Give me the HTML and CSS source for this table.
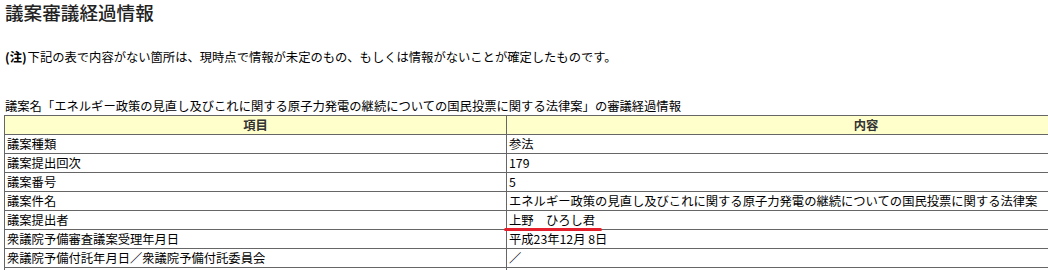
FILE: index.html
```html
<!DOCTYPE html>
<html lang="ja">
<head>
<meta charset="utf-8">
<title>議案審議経過情報</title>
<link rel="stylesheet" href="styles.css">
</head>
<body>
<h1 class="title">議案審議経過情報</h1>
<p class="note"><b>(注)</b>下記の表で内容がない箇所は、現時点で情報が未定のもの、もしくは情報がないことが確定したものです。</p>
<div class="caption">議案名「エネルギー政策の見直し及びこれに関する原子力発電の継続についての国民投票に関する法律案」の審議経過情報</div>
<table class="info">
  <thead>
    <tr><th class="col-item">項目</th><th class="col-body">内容</th></tr>
  </thead>
  <tbody>
    <tr><td>議案種類</td><td>参法</td></tr>
    <tr><td>議案提出回次</td><td>179</td></tr>
    <tr><td>議案番号</td><td>5</td></tr>
    <tr><td>議案件名</td><td>エネルギー政策の見直し及びこれに関する原子力発電の継続についての国民投票に関する法律案</td></tr>
    <tr><td>議案提出者</td><td class="marked">上野　ひろし君<span class="redline"></span></td></tr>
    <tr><td>衆議院予備審査議案受理年月日</td><td>平成23年12月 8日</td></tr>
    <tr><td>衆議院予備付託年月日／衆議院予備付託委員会</td><td>／</td></tr>
    <tr><td>&nbsp;</td><td>&nbsp;</td></tr>
  </tbody>
</table>
</body>
</html>
```
FILE: styles.css
```css
html, body {
  margin: 0;
  padding: 0;
  background: #fff;
}
body {
  padding: 0 0 0 4px;
  font-family: "Noto Sans CJK JP", "Noto Sans", sans-serif;
  font-size: 12.3px;
  color: #000;
  width: 1300px;
}
.title {
  margin: 0;
  font-size: 18.6px;
  font-weight: 500;
  line-height: 24px;
  color: #222;
  padding-left: 1px;
}
.note {
  margin: 24px 0 0 0;
  line-height: 18px;
  padding-left: 1px;
}
.note b {
  font-weight: bold;
  margin-right: 1px;
}
.caption {
  margin-top: 31px;
  line-height: 18px;
  padding-left: 1px;
}
.info {
  border-collapse: collapse;
  width: 1222px;
}
.info th, .info td {
  border: 1px solid #666;
  padding: 0 2px;
  height: 18px;
  line-height: 18px;
  text-align: left;
  white-space: nowrap;
  font-weight: normal;
  vertical-align: middle;
}
.info th {
  background: #ffffcc;
  text-align: center;
  font-weight: bold;
  color: #333;
}
.info .col-item {
  width: 497px;
}
.marked {
  position: relative;
}
.redline {
  position: absolute;
  left: -3px;
  top: 17px;
  width: 98px;
  height: 3px;
  border-radius: 2px;
  background: #e3202b;
  z-index: 1;
}
```
